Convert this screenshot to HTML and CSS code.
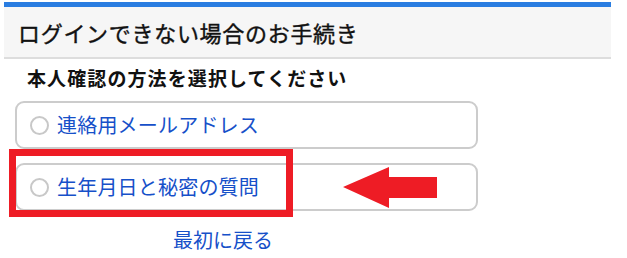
FILE: index.html
```html
<!DOCTYPE html>
<html lang="ja">
<head>
<meta charset="utf-8">
<link rel="stylesheet" href="styles.css">
</head>
<body>
<div class="page">
  <div class="header"><h1 class="title">ログインできない場合のお手続き</h1></div>
  <div class="content">
    <p class="lead">本人確認の方法を選択してください</p>
    <div class="options">
      <label class="option"><span class="radio"></span><span class="label">連絡用メールアドレス</span></label>
      <label class="option"><span class="radio"></span><span class="label">生年月日と秘密の質問</span></label>
    </div>
    <a class="back" href="#">最初に戻る</a>
  </div>
  <div class="highlight"></div>
  <svg class="arrow" width="94" height="41" viewBox="0 0 94 41">
    <polygon points="0,20 46,0 46,10 94,10 94,31 46,31 46,41" fill="#ee1c25"/>
  </svg>
</div>
</body>
</html>
```
FILE: styles.css
```css
html, body {
  margin: 0;
  padding: 0;
  background: #fff;
}
body {
  font-family: "Noto Sans CJK JP", "Noto Sans", sans-serif;
}
.page {
  position: relative;
  width: 607px;
  margin: 2px 0 0 4px;
  height: 256px;
}
.header {
  border-top: 5px solid #2a7de1;
  background: #f6f6f6;
  border-bottom: 2px solid #dddddd;
  height: 50px;
  display: flex;
  align-items: center;
  padding-left: 14px;
}
.title {
  margin: 0;
  font-size: 22px;
  font-weight: normal;
  -webkit-text-stroke: 0.4px #111;
  color: #111;
  line-height: 1;
  letter-spacing: 0.7px;
}
.content {
  padding-left: 11px;
}
.lead {
  margin: 0;
  padding: 7px 0 0 12px;
  font-size: 19px;
  font-weight: bold;
  color: #111;
  line-height: 24px;
  letter-spacing: 1.1px;
}
.options {
  margin-top: 11px;
  display: flex;
  flex-direction: column;
  gap: 14px;
  width: 463px;
}
.option {
  box-sizing: border-box;
  height: 48px;
  border: 2px solid #cccccc;
  border-radius: 9px;
  display: flex;
  align-items: center;
  padding-left: 13px;
  background: #fff;
}
.radio {
  box-sizing: border-box;
  width: 19px;
  height: 19px;
  border: 2px solid #c8c8c8;
  border-radius: 50%;
  margin-right: 8px;
  flex: none;
}
.label {
  font-size: 20px;
  color: #1650c9;
  line-height: 1;
  letter-spacing: 0.2px;
}
.back {
  display: inline-block;
  margin: 19px 0 0 158px;
  font-size: 20px;
  color: #1650c9;
  text-decoration: none;
  line-height: 1;
}
.highlight {
  position: absolute;
  left: 5px;
  top: 147px;
  width: 270px;
  height: 54px;
  border: 7px solid #ee1c25;
}
.arrow {
  position: absolute;
  left: 339px;
  top: 165px;
}
```
